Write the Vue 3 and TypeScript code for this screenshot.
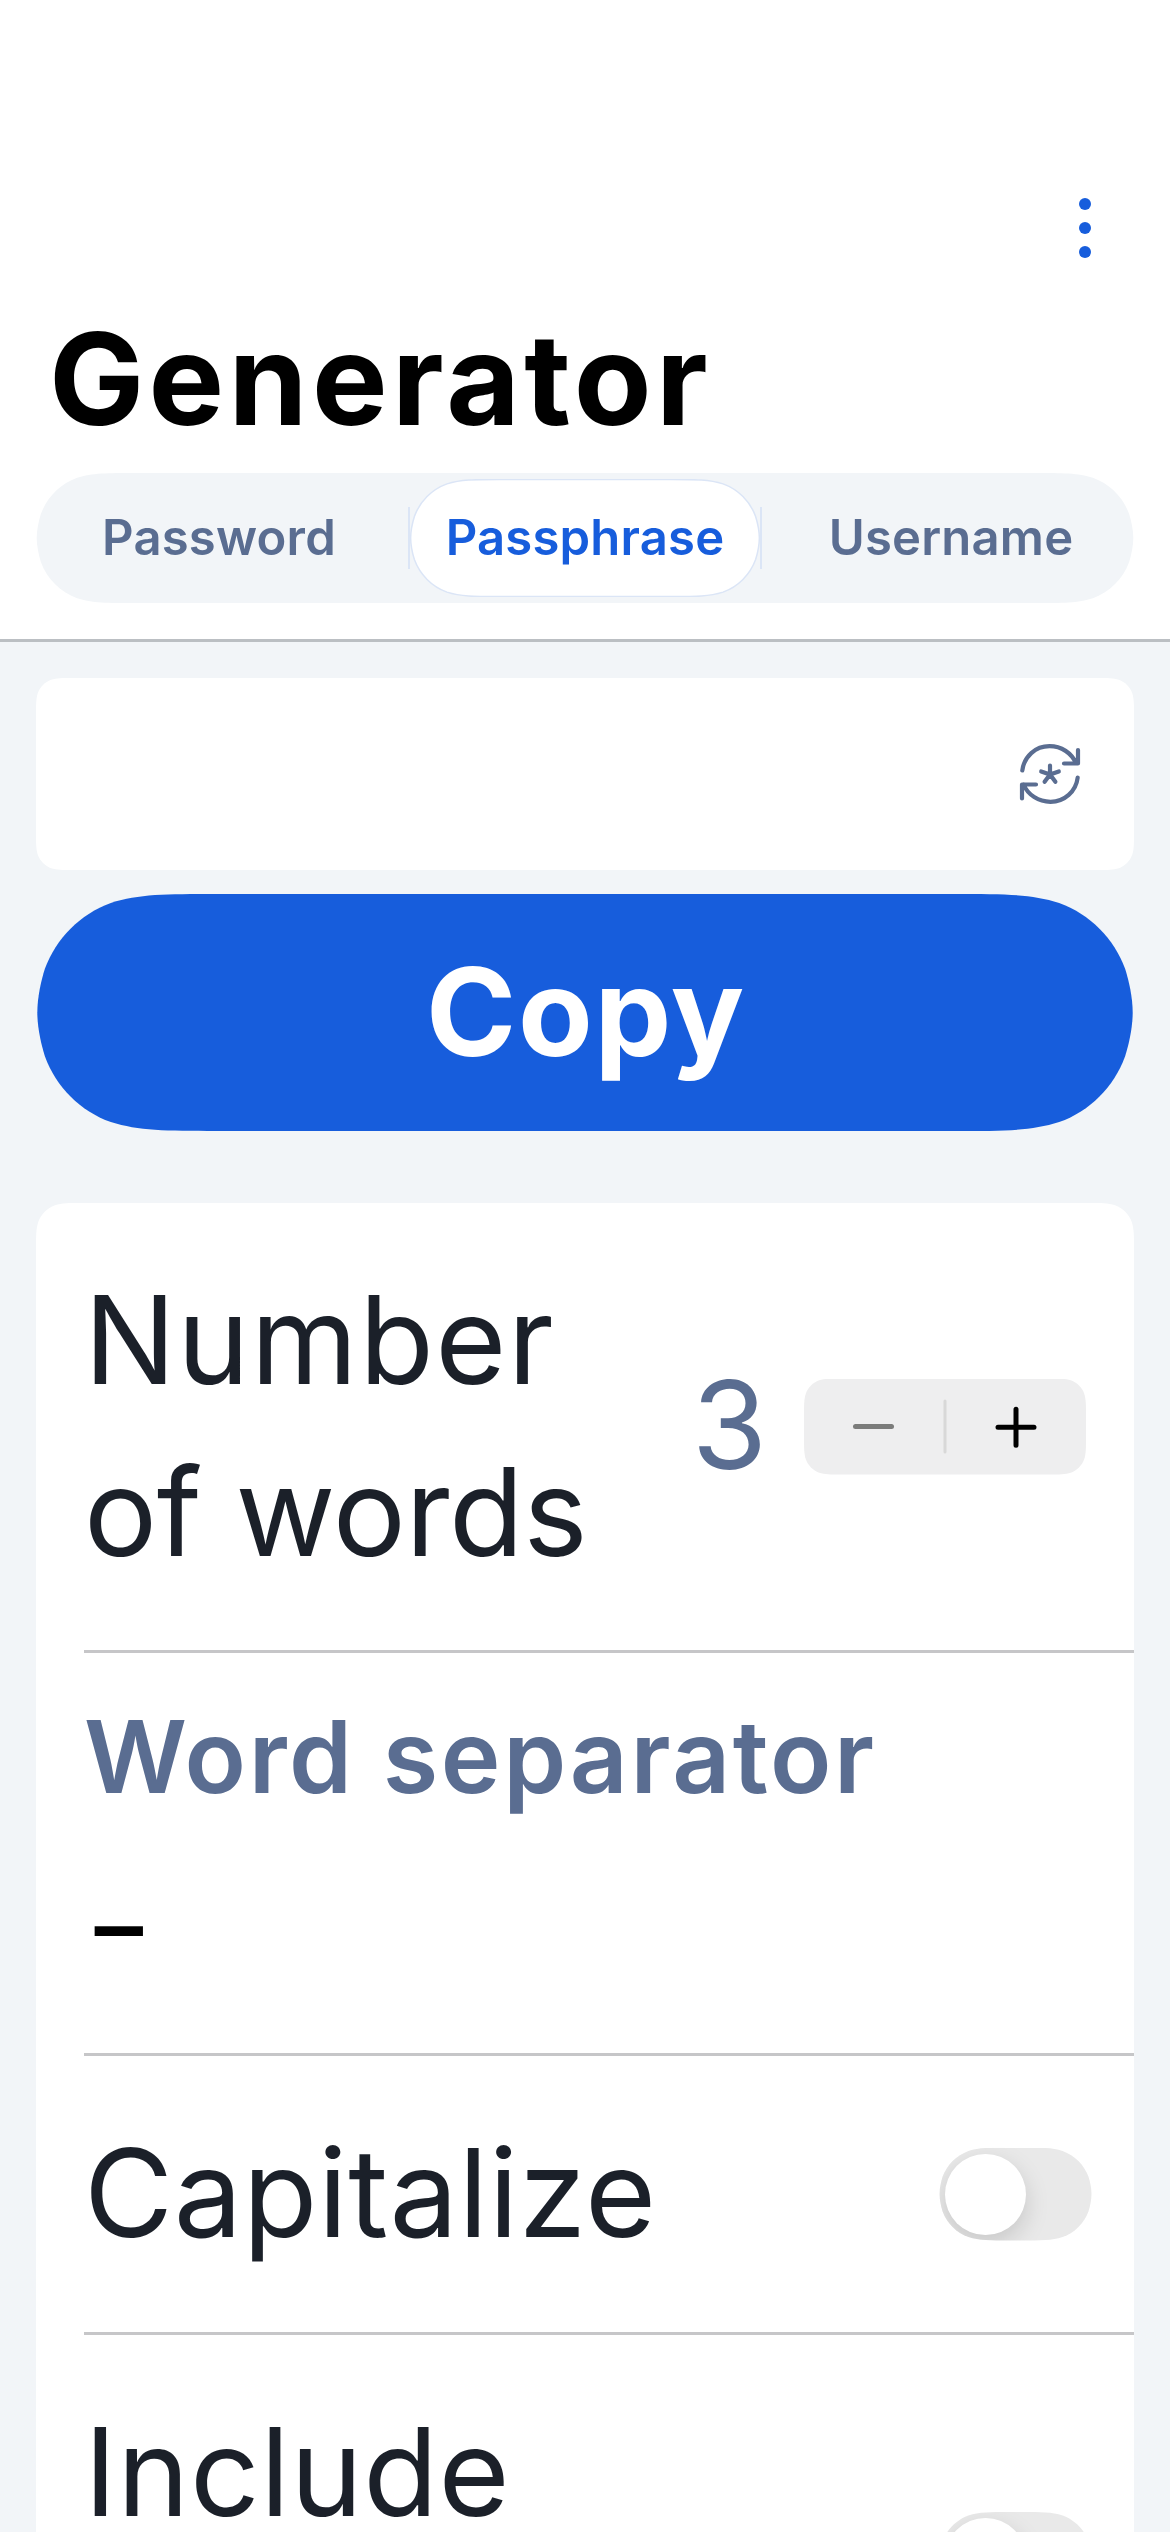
<script setup lang="ts">
import { ref } from 'vue'

interface Tab {
  label: string
  key: string
}

const tabs: Tab[] = [
  { label: 'Password', key: 'password' },
  { label: 'Passphrase', key: 'passphrase' },
  { label: 'Username', key: 'username' },
]
const active = ref('passphrase')
const words = ref(3)
const separator = ref('-')

// Rounded rectangle with continuous (smooth) corners.
// Capsules are too short for the full side curve, so theirs ends at mid-height.
function smoothRect(w: number, h: number, r: number, inset = 0): string {
  const k = (n: number) => n * r
  const capsule = h / 2 <= r
  const endX = Math.min(k(1.52866), w / 2)
  const endY = capsule ? h / 2 : Math.min(k(1.52866), h / 2)
  const cX = Math.min(k(1.08849), w / 2)
  const e = capsule ? k(0.011) : 0
  const [ax, ay] = capsule ? [k(0.042), k(0.737)] : [0, k(0.86841)]
  const [bx, by] = capsule ? [k(0.012), k(0.87)] : [0, Math.min(k(1.08849), h / 2)]
  const p = (x: number, y: number) => `${(x + inset).toFixed(2)} ${(y + inset).toFixed(2)}`
  return [
    `M${p(endX, 0)}L${p(w - endX, 0)}`,
    `C${p(w - cX, 0)} ${p(w - k(0.86841), 0)} ${p(w - k(0.63149), k(0.07491))}`,
    `C${p(w - k(0.37282), k(0.16906))} ${p(w - k(0.16906), k(0.37282))} ${p(w - k(0.07491), k(0.63149))}`,
    `C${p(w - ax, ay)} ${p(w - bx, by)} ${p(w - e, endY)}`,
    `L${p(w - e, h - endY)}`,
    `C${p(w - bx, h - by)} ${p(w - ax, h - ay)} ${p(w - k(0.07491), h - k(0.63149))}`,
    `C${p(w - k(0.16906), h - k(0.37282))} ${p(w - k(0.37282), h - k(0.16906))} ${p(w - k(0.63149), h - k(0.07491))}`,
    `C${p(w - k(0.86841), h)} ${p(w - cX, h)} ${p(w - endX, h)}`,
    `L${p(endX, h)}`,
    `C${p(cX, h)} ${p(k(0.86841), h)} ${p(k(0.63149), h - k(0.07491))}`,
    `C${p(k(0.37282), h - k(0.16906))} ${p(k(0.16906), h - k(0.37282))} ${p(k(0.07491), h - k(0.63149))}`,
    `C${p(ax, h - ay)} ${p(bx, h - by)} ${p(e, h - endY)}`,
    `L${p(e, endY)}`,
    `C${p(bx, by)} ${p(ax, ay)} ${p(k(0.07491), k(0.63149))}`,
    `C${p(k(0.16906), k(0.37282))} ${p(k(0.37282), k(0.16906))} ${p(k(0.63149), k(0.07491))}`,
    `C${p(k(0.86841), 0)} ${p(cX, 0)} ${p(endX, 0)}Z`,
  ].join('')
}
const clip = (w: number, h: number, r: number) => ({ clipPath: `path('${smoothRect(w, h, r)}')` })
</script>

<template>
  <div class="screen">
    <header class="header">
      <div class="toolbar">
        <svg class="more" width="12" height="60" viewBox="0 0 12 60">
          <circle cx="6" cy="6" r="6" />
          <circle cx="6" cy="30" r="6" />
          <circle cx="6" cy="54" r="6" />
        </svg>
      </div>
      <h1 class="title">Generator</h1>
      <nav class="tabs" :style="clip(1098, 130, 65)">
        <button
          v-for="tab in tabs"
          :key="tab.key"
          class="tab"
          :class="[tab.key, { active: tab.key === active }]"
          @click="active = tab.key"
        >
          <svg v-if="tab.key === active" class="pill" width="354" height="118" viewBox="0 0 354 118">
            <path class="rule" d="M1 28V90M353 28V90" />
            <path class="pill-shape" :d="smoothRect(350, 117, 58.5, 0.5)" transform="translate(1.5 0)" />
          </svg>
          <span class="tab-label">{{ tab.label }}</span>
        </button>
      </nav>
    </header>

    <main class="content">
      <section class="field" :style="clip(1098, 192, 24)">
        <svg class="refresh" width="60" height="60" viewBox="0 0 60 60">
          <path d="M2.3 26.5C4 12.500 15.500 2.200 29.500 2.200C41.500 2.200 51.500 9 56 19.200M58 6V19.500H44" />
          <path d="M57.700 33.500C56 47.500 44.500 57.800 30.500 57.800C18.500 57.800 8 51 3.500 40.500M2 54.500V40.500H16" />
          <path d="M30 21.500V30.500M30 30.500L21.200 27.500M30 30.500L38.800 27.500M30 30.500L24.600 37.800M30 30.500L35.400 37.800" />
        </svg>
      </section>

      <button class="copy" :style="clip(1098, 237, 118.5)"><span>Copy</span></button>

      <section class="card" :style="clip(1098, 1600, 30)">
        <div class="row">
          <div class="label"><span class="number">Number</span><br /><span class="of-words">of words</span></div>
          <div class="count">{{ words }}</div>
          <div class="stepper" :style="clip(282, 96, 24)">
            <svg width="282" height="96" viewBox="0 0 282 96">
              <path class="minus" d="M51.500 47.500H87.500" />
              <path class="divider" d="M141 22V73" />
              <path class="plus" d="M194 48.300H230M212 30.300V66.300" />
            </svg>
          </div>
        </div>
        <div class="row separator">
          <div class="caption">Word separator</div>
          <div class="value">{{ separator }}</div>
        </div>
        <div class="row">
          <div class="label capitalize">Capitalize</div>
          <div class="toggle" :style="clip(153, 93, 46.5)"><i class="knob"></i></div>
        </div>
        <div class="row tall">
          <div class="label include">Include</div>
          <div class="toggle" :style="clip(153, 93, 46.5)"><i class="knob"></i></div>
        </div>
      </section>
    </main>
  </div>
</template>

<style>
body {
  margin: 0;
}
</style>

<style scoped>
.screen {
  width: 1170px;
  height: 2532px;
  overflow: hidden;
  background: #f2f5f8;
  font-family: Inter, 'Liberation Sans', sans-serif;
  color: #1b2029;
}
.header {
  box-sizing: border-box;
  height: 642px;
  background: #fff;
  border-bottom: 3px solid #bbbfc3;
}
.toolbar {
  display: flex;
  justify-content: flex-end;
  box-sizing: border-box;
  height: 304px;
  padding: 198px 79px 0 0;
}
.more {
  fill: #175ddc;
}
.title {
  margin: 0 0 19px 49px;
  font-size: 127px;
  line-height: 150px;
  font-weight: 700;
  letter-spacing: 4.3px;
  color: #000;
}
.tabs {
  display: flex;
  width: 1098px;
  height: 130px;
  margin: 0 36px;
  background: #f2f5f8;
}
button {
  border: 0;
  padding: 0;
  background: none;
  font-family: inherit;
}
.tab {
  position: relative;
  flex: 1;
  font-size: 49px;
  line-height: 130px;
  font-weight: 600;
  letter-spacing: 0.2px;
  color: #5a6d91;
}
.tab.active {
  color: #175ddc;
}
.tab-label {
  position: relative;
}
.pill {
  position: absolute;
  top: 6px;
  left: 6px;
}
.rule {
  stroke: #dbe5f6;
  stroke-width: 2;
}
.pill-shape {
  fill: #fff;
  stroke: #dbe5f6;
  stroke-width: 1.5;
}
.content {
  padding: 36px 36px 0;
}
.field {
  display: flex;
  align-items: center;
  justify-content: flex-end;
  box-sizing: border-box;
  height: 192px;
  padding-right: 54px;
  background: #fff;
}
.refresh {
  fill: none;
  stroke: #5a6d91;
  stroke-width: 4.2;
  stroke-linecap: round;
  stroke-linejoin: round;
  overflow: visible;
}
.copy {
  display: block;
  width: 1098px;
  height: 237px;
  margin: 24px 0 72px;
  padding: 0 0 2px 2px;
  background: #175ddc;
  color: #fff;
  font-size: 122px;
  line-height: 235px;
  font-weight: 700;
  letter-spacing: 1.7px;
}
.card {
  height: 1600px;
  background: #fff;
}
.row {
  display: flex;
  align-items: center;
  box-sizing: border-box;
  height: 279px;
  margin-left: 48px;
  border-bottom: 3px solid #c6c6c8;
}
.row:first-child,
.row.tall {
  height: 450px;
}
.row.separator {
  display: block;
  height: 403px;
  padding-top: 43px;
}
.label {
  flex: 1;
  padding-bottom: 2px;
  font-size: 122px;
  line-height: 172px;
  white-space: nowrap;
}
.number {
  letter-spacing: 1.4px;
}
.of-words {
  letter-spacing: -0.4px;
}
.capitalize,
.include {
  letter-spacing: 0.6px;
}
.tall .label {
  padding-bottom: 174px;
}
.caption {
  font-size: 101px;
  line-height: 120px;
  font-weight: 600;
  letter-spacing: 2.6px;
  color: #5a6d91;
}
.value {
  width: 60px;
  margin-top: 29px;
  font-size: 122px;
  line-height: 160px;
  font-weight: 400;
  color: #000;
  transform: scaleX(1.24);
  transform-origin: left;
}
.count {
  margin-right: 37px;
  padding-bottom: 3px;
  font-size: 122px;
  line-height: 150px;
  color: #5a6d91;
}
.stepper {
  width: 282px;
  height: 96px;
  margin-right: 48px;
  background: #eeeeef;
}
.stepper svg {
  display: block;
  fill: none;
  stroke-width: 5;
  stroke-linecap: round;
}
.minus {
  stroke: #7b7c7b;
}
.divider {
  stroke: #d8d8d8;
  stroke-width: 3;
}
.plus {
  stroke: #000;
}
.toggle {
  display: flex;
  align-items: center;
  width: 153px;
  height: 93px;
  margin-right: 42px;
  background: #e9e9e9;
}
.knob {
  width: 81px;
  height: 81px;
  margin-left: 6px;
  border-radius: 50%;
  background: #fff;
  box-shadow: 0 9px 24px rgba(0, 0, 0, 0.15);
}
</style>
